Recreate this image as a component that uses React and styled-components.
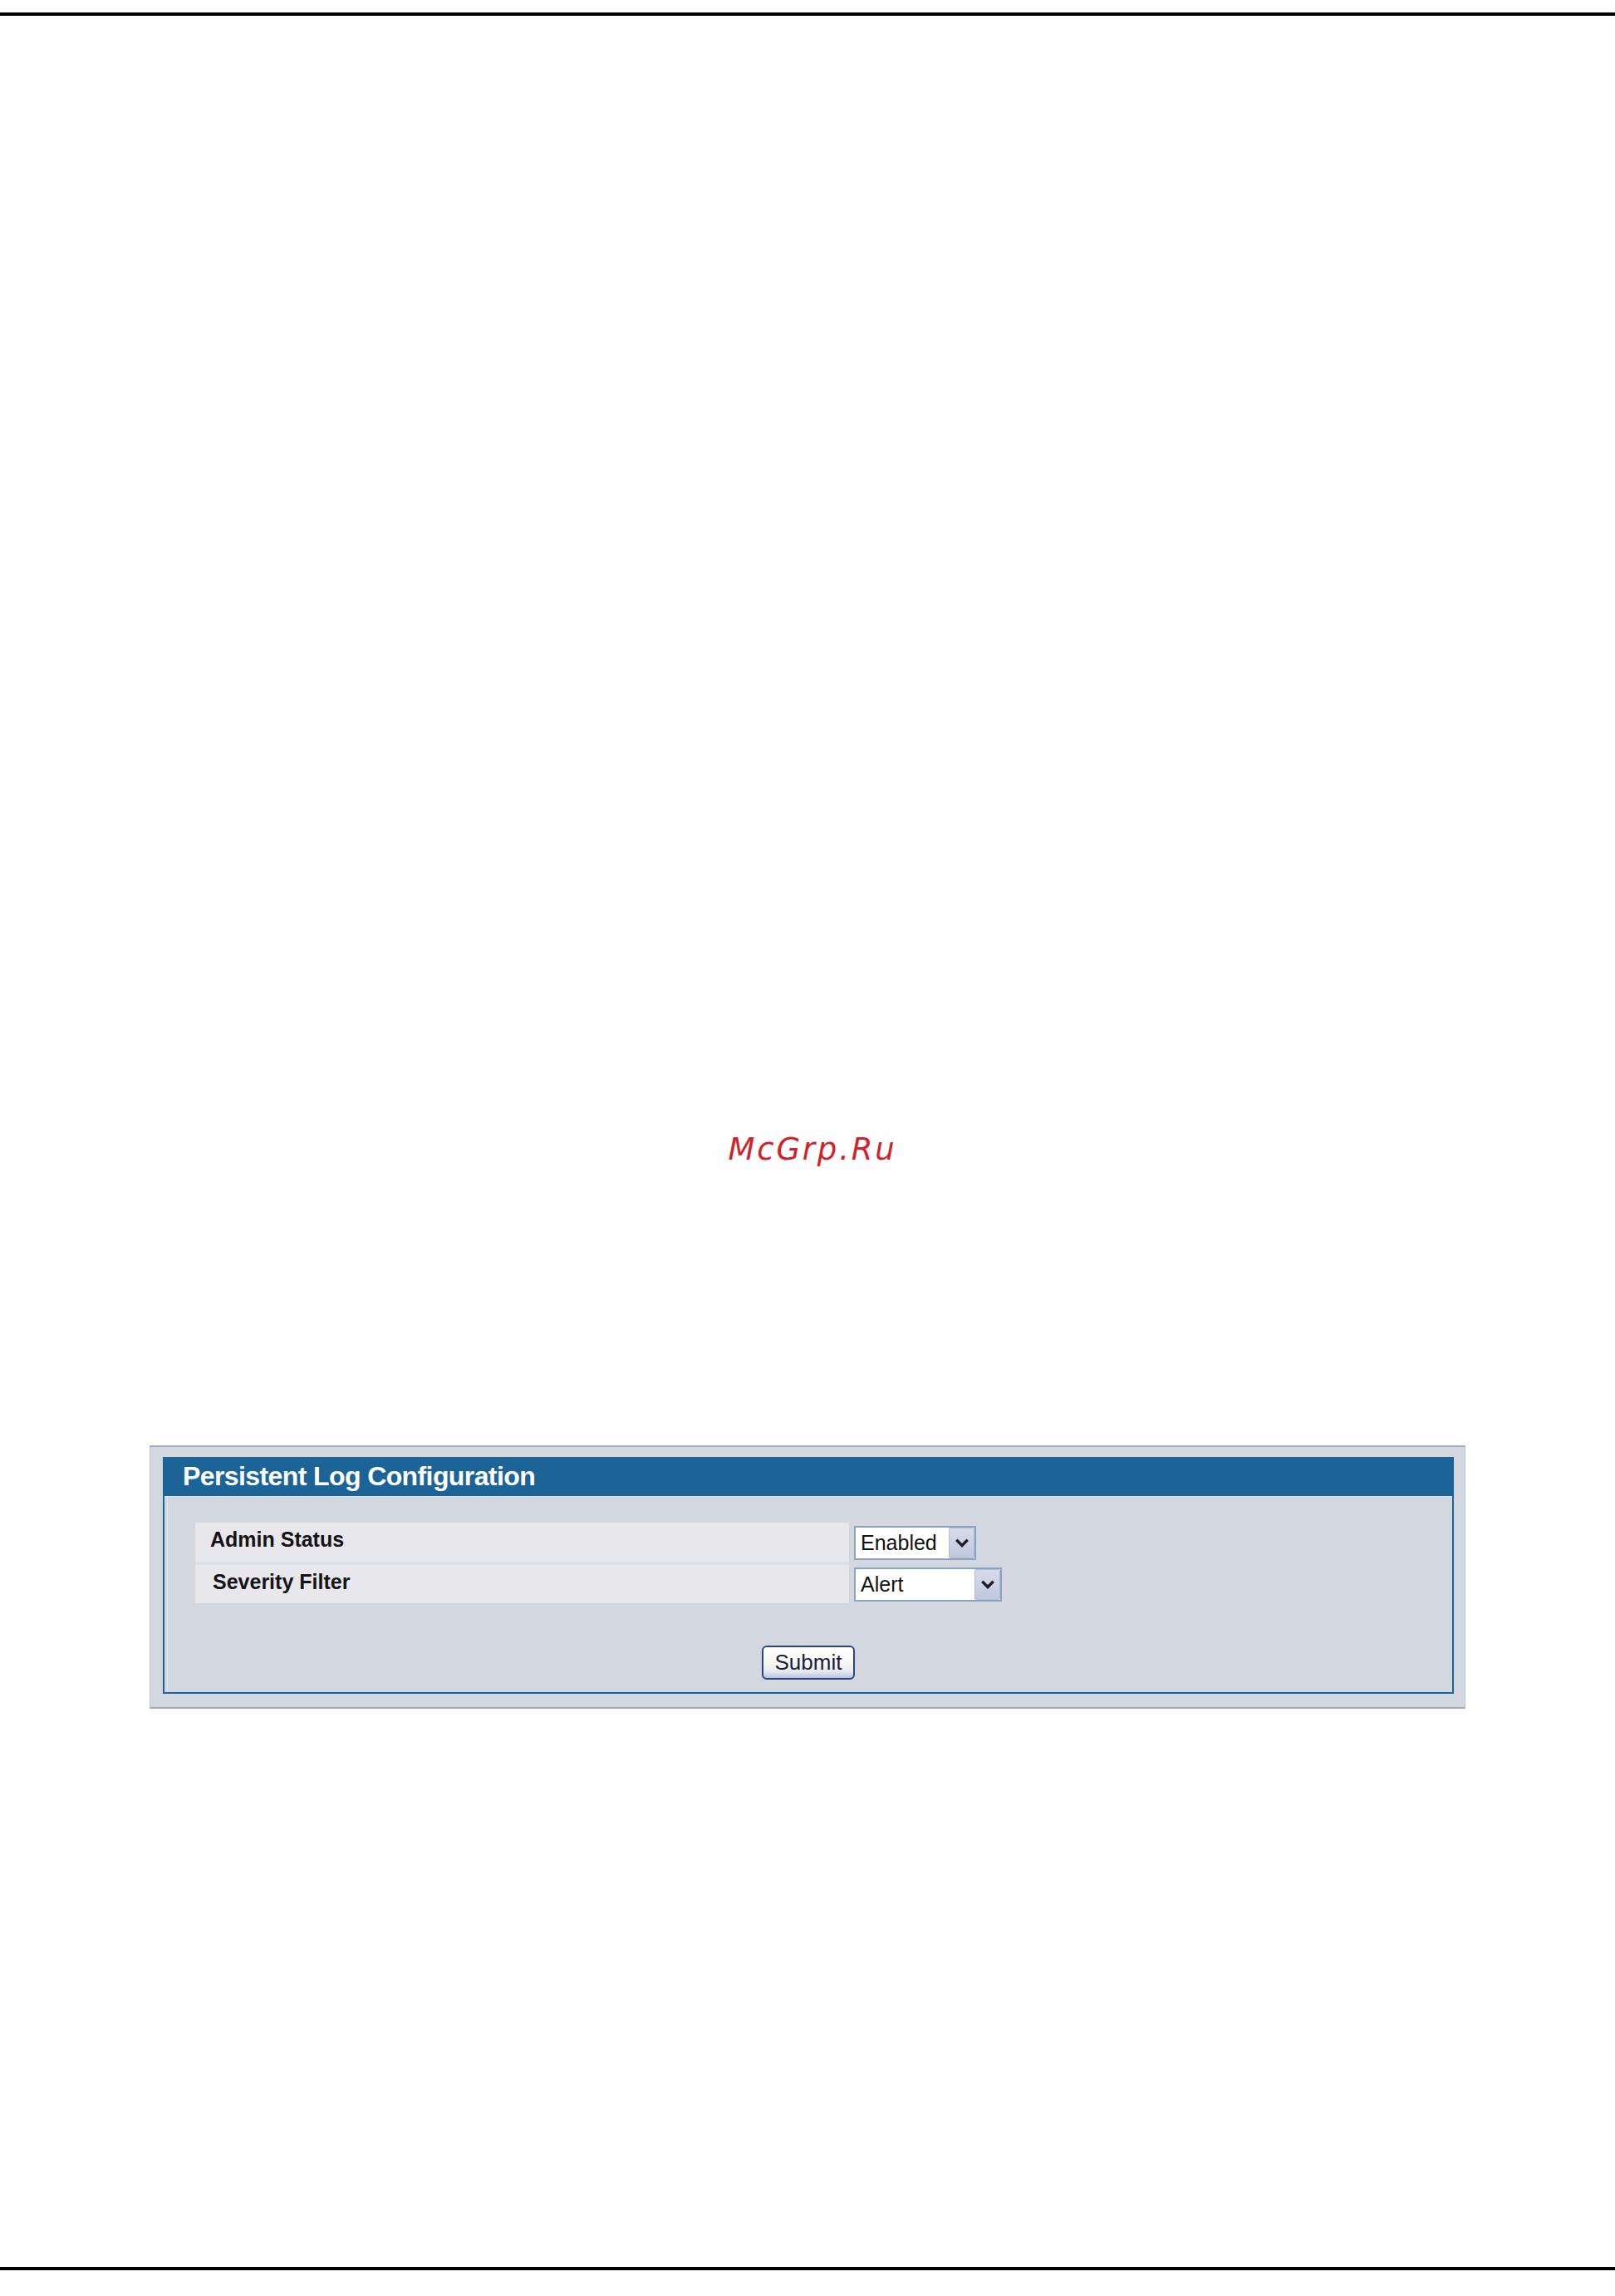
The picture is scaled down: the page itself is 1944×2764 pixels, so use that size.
import React from 'react';
import styled, { createGlobalStyle } from 'styled-components';

const GlobalStyle = createGlobalStyle`
  html, body {
    margin: 0;
    padding: 0;
    background: #ffffff;
  }
  body {
    font-family: "Liberation Sans", Arial, sans-serif;
  }
`

const Page = styled.div`
  width: 1944px;
  height: 2764px;
  display: flex;
  flex-direction: column;
  overflow: hidden;
  background: #fefefe;
`

const Rule = styled.div`
  height: 4px;
  background: #000;
  margin-top: ${props => props.offset}px;
  flex-shrink: 0;
`

const Watermark = styled.div`
  margin-top: 1345px;
  height: 40px;
  line-height: 40px;
  padding-left: 12px;
  text-align: center;
  font-family: "DejaVu Sans", "Liberation Sans", sans-serif;
  font-style: italic;
  font-size: 37px;
  letter-spacing: 2.8px;
  color: #d0222b;
`

const Panel = styled.div`
  box-sizing: border-box;
  width: 1584px;
  margin: 336px 0 0 180px;
  padding: 12px 13px 16px 15px;
  background: #d3d7df;
  border-top: 2px solid #a5aab2;
  border-bottom: 2px solid #a5aab2;
  border-left: 1px solid #c2c6ce;
  border-right: 1px solid #c2c6ce;
`

const Frame = styled.div`
  border: 2px solid #1c6497;
  background: #d3d7df;
`

const Header = styled.div`
  height: 46px;
  line-height: 42px;
  padding-left: 22px;
  background: #1c6497;
  color: #ffffff;
  font-size: 32px;
  font-weight: bold;
  letter-spacing: -0.6px;
  border-bottom: 1px solid #e2e6ec;
  box-sizing: border-box;
`

const Body = styled.div`
  display: flex;
  flex-direction: column;
  padding: 31px 0 15px 37px;
  box-shadow: inset 3px 0 0 #d3d7df, inset 4px 0 0 #e1e4ea;
`

const Rows = styled.div`
  display: flex;
  flex-direction: column;
`

const Row = styled.div`
  display: flex;
  align-items: flex-start;
  gap: 6px;
`

const Label = styled.div`
  width: 787px;
  height: ${props => props.last ? 46 : 51}px;
  line-height: 40px;
  padding-left: ${props => props.inset}px;
  box-sizing: border-box;
  background: #e7e7ec;
  border-bottom: ${props => props.last ? 'none' : '4px solid #dcdfe6'};
  font-size: 25px;
  font-weight: bold;
  color: #141414;
`

const Select = styled.div`
  display: flex;
  width: ${props => props.width}px;
  height: 41px;
  margin-top: ${props => props.top}px;
  box-sizing: border-box;
  border: 2px solid #8aa3c0;
  background: #ffffff;
`

const SelectText = styled.span`
  flex: 1;
  padding-left: 6px;
  line-height: 37px;
  font-size: 25px;
  color: #111;
`

const Arrow = styled.span`
  width: 31px;
  display: flex;
  align-items: center;
  justify-content: center;
  box-sizing: border-box;
  border: 1px solid #b3bbd4;
  border-radius: 2px;
  background: linear-gradient(#d8dbeb, #c2c7dd);
`

const SubmitButton = styled.button`
  align-self: center;
  margin: 51px 0 0 -37px;
  width: 112px;
  height: 41px;
  padding: 0;
  border: 2px solid #27467f;
  border-radius: 6px;
  background: linear-gradient(#ffffff 0%, #f6f6f2 55%, #e6e7ea 80%, #b8c4e6 100%);
  font-family: "Liberation Sans", Arial, sans-serif;
  font-size: 26px;
  color: #1c1c40;
  cursor: pointer;
`

const Chevron = () => (
  <svg width="16" height="12" viewBox="0 0 16 12">
    <path d="M2.5 3 L8 8.5 L13.5 3" fill="none" stroke="#1e1e2a" strokeWidth="3.4" strokeLinecap="square" />
  </svg>
)

const fields = [
  { label: 'Admin Status', value: 'Enabled', width: 147, inset: 18, top: 4 },
  { label: 'Severity Filter', value: 'Alert', width: 178, inset: 21, top: 3 },
]

const App = () => (
  <>
    <GlobalStyle />
    <Page>
      <Rule offset={15} />
      <Watermark>McGrp.Ru</Watermark>
      <Panel>
        <Frame>
          <Header>Persistent Log Configuration</Header>
          <Body>
            <Rows>
              {fields.map((f, i) => (
                <Row key={f.label}>
                  <Label inset={f.inset} last={i === fields.length - 1}>{f.label}</Label>
                  <Select width={f.width} top={f.top}>
                    <SelectText>{f.value}</SelectText>
                    <Arrow><Chevron /></Arrow>
                  </Select>
                </Row>
              ))}
            </Rows>
            <SubmitButton type="button">Submit</SubmitButton>
          </Body>
        </Frame>
      </Panel>
      <Rule offset={672} />
    </Page>
  </>
)

export default App;
